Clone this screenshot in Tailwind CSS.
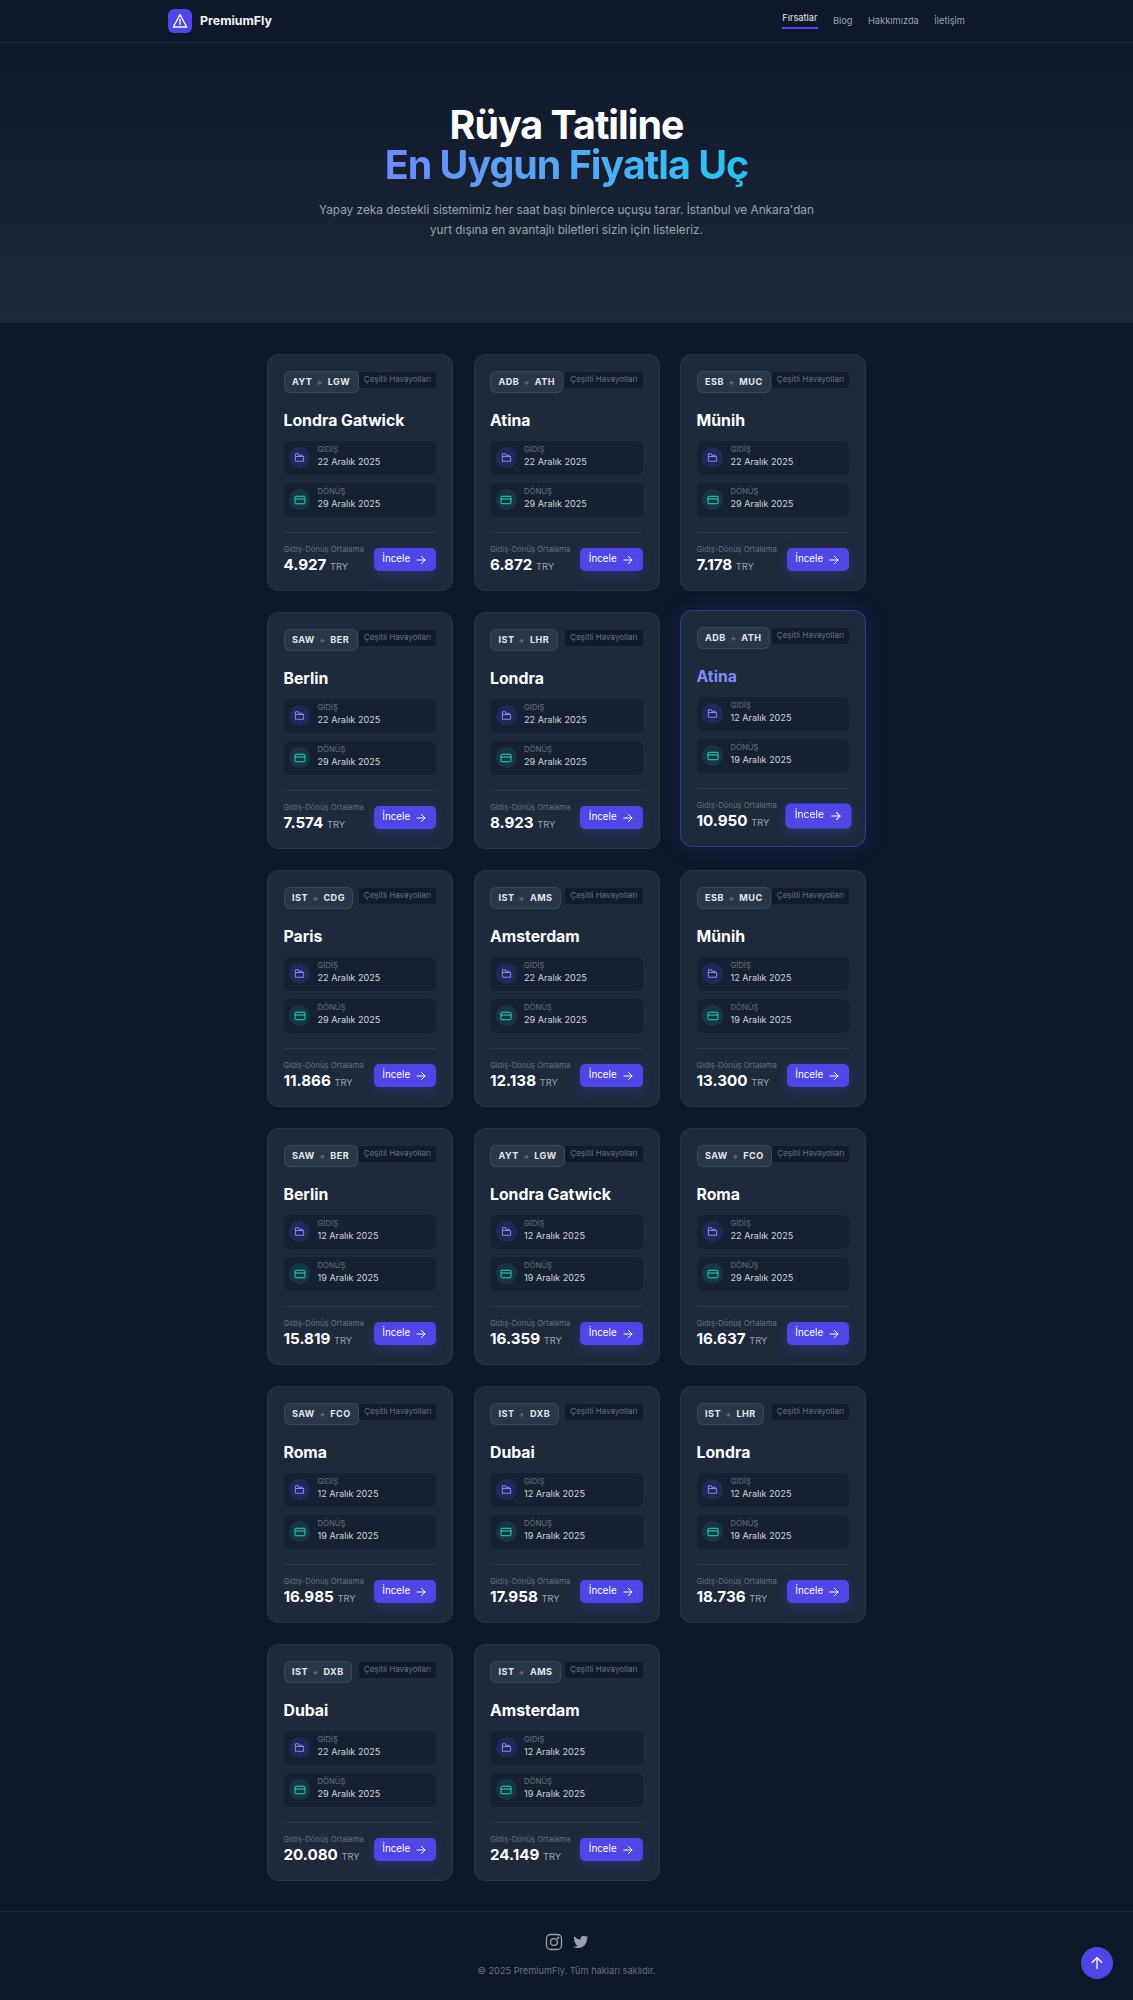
<!DOCTYPE html>
<html lang="tr">
<head>
  <meta charset="UTF-8" />
  <meta name="viewport" content="width=device-width, initial-scale=1.0"/>
  <title>PremiumFly</title>
  <script src="https://cdn.jsdelivr.net/npm/@tailwindcss/browser@4"></script>
</head>
<body class="bg-[#0f172a] text-white min-h-screen flex flex-col font-['Inter',sans-serif]">

  <!-- Navbar -->
  <nav class="h-[43px] bg-[#0f172a] border-b border-[#1e293b] flex justify-center">
    <div class="w-[797px] flex items-center justify-between">
      <div class="flex items-center gap-2">
        <div class="w-[24px] h-[24px] rounded-[6px] bg-[#4f46e5] flex items-center justify-center">
          <svg class="w-[16px] h-[16px]" viewBox="0 0 24 24" fill="none" stroke="white" stroke-width="2" stroke-linejoin="round" stroke-linecap="round"><path d="M12 2.500 22 21H2Z"/><path d="M12 9.500V17"/></svg>
        </div>
        <span class="text-[12.4px] font-bold text-[#f3f4f6]">PremiumFly</span>
      </div>
      <div class="flex items-center gap-[15.400px] text-[9.300px] text-[#9ca3af]">
        <a class="text-[#e5e7eb] border-b-2 border-[#4f46e5] pb-[2px] -mt-[2px]">Fırsatlar</a>
        <a>Blog</a>
        <a>Hakkımızda</a>
        <a>İletişim</a>
      </div>
    </div>
  </nav>

  <!-- Hero -->
  <header class="h-[280px] bg-gradient-to-b from-[#0f172a] to-[#1e293b] flex flex-col items-center pt-[62px]">
    <h1 class="text-[39.4px] leading-[40px] font-bold text-center tracking-tight">
      Rüya Tatiline<br>
      <span class="bg-gradient-to-r from-[#6b8cf8] to-[#22c4ee] bg-clip-text text-transparent">En Uygun Fiyatla Uç</span>
    </h1>
    <p class="mt-[16px] w-[520px] text-center text-[11.800px] leading-[19.500px] text-[#9ca3af]">Yapay zeka destekli sistemimiz her saat başı binlerce uçuşu tarar. İstanbul ve Ankara'dan<br>yurt dışına en avantajlı biletleri sizin için listeleriz.</p>
  </header>

  <!-- Cards -->
  <main class="flex justify-center pt-[31px] pb-[30px]">
    <div id="grid" class="w-[599px] grid grid-cols-3 gap-x-[20.500px] gap-y-[21px]"></div>
  </main>

  <!-- Footer -->
  <footer class="flex-1 bg-[#0f172a] border-t border-[#1e293b] flex flex-col items-center pt-[21px]">
    <div class="flex items-center gap-[10px] text-[#9ca3af]">
      <svg class="w-[18px] h-[18px]" viewBox="0 0 24 24" fill="none" stroke="currentColor" stroke-width="1.700"><rect x="2" y="2" width="20" height="20" rx="5.500"/><circle cx="12" cy="12" r="4.500"/><circle cx="17.500" cy="6.500" r="0.600" fill="currentColor"/></svg>
      <svg class="w-[16px] h-[16px]" viewBox="0 0 24 24" fill="currentColor"><path d="M23 4.900c-.8.400-1.700.600-2.600.700.900-.600 1.700-1.400 2-2.500-.900.500-1.900.900-2.900 1.100a4.600 4.600 0 0 0-7.900 4.200A13 13 0 0 1 2.100 3.600a4.600 4.600 0 0 0 1.400 6.100c-.700 0-1.400-.200-2.100-.600 0 2.300 1.600 4.200 3.700 4.700-.700.200-1.400.200-2.100.100.600 1.900 2.300 3.200 4.300 3.200A9.300 9.300 0 0 1 .5 19a13 13 0 0 0 7.100 2c8.500 0 13.200-7.100 13.200-13.200v-.600c.900-.600 1.700-1.400 2.200-2.300Z"/></svg>
    </div>
    <p class="mt-[13px] text-[9.200px] text-[#6b7280]">© 2025 PremiumFly. Tüm hakları saklıdır.</p>
  </footer>

  <button class="fixed right-[20px] bottom-[21px] w-[32px] h-[32px] rounded-full bg-[#4f46e5] flex items-center justify-center">
    <svg class="w-[16px] h-[16px]" viewBox="0 0 24 24" fill="none" stroke="white" stroke-width="2" stroke-linecap="round" stroke-linejoin="round"><path d="M12 20V4"/><path d="m5 11 7-7 7 7"/></svg>
  </button>

  <script>
    const d1 = ['22 Aralık 2025', '29 Aralık 2025'];
    const d2 = ['12 Aralık 2025', '19 Aralık 2025'];
    const deals = [
      ['AYT', 'LGW', 'Londra Gatwick', d1, '4.927'],
      ['ADB', 'ATH', 'Atina', d1, '6.872'],
      ['ESB', 'MUC', 'Münih', d1, '7.178'],
      ['SAW', 'BER', 'Berlin', d1, '7.574'],
      ['IST', 'LHR', 'Londra', d1, '8.923'],
      ['ADB', 'ATH', 'Atina', d2, '10.950', true],
      ['IST', 'CDG', 'Paris', d1, '11.866'],
      ['IST', 'AMS', 'Amsterdam', d1, '12.138'],
      ['ESB', 'MUC', 'Münih', d2, '13.300'],
      ['SAW', 'BER', 'Berlin', d2, '15.819'],
      ['AYT', 'LGW', 'Londra Gatwick', d2, '16.359'],
      ['SAW', 'FCO', 'Roma', d1, '16.637'],
      ['SAW', 'FCO', 'Roma', d2, '16.985'],
      ['IST', 'DXB', 'Dubai', d2, '17.958'],
      ['IST', 'LHR', 'Londra', d2, '18.736'],
      ['IST', 'DXB', 'Dubai', d1, '20.080'],
      ['IST', 'AMS', 'Amsterdam', d2, '24.149'],
    ];

    const folderIcon = `<svg class="w-[11px] h-[11px]" viewBox="0 0 24 24" fill="none" stroke="#818cf8" stroke-width="2.200" stroke-linejoin="round"><path d="M3 20V5a1 1 0 0 1 1-1h5l2 3h6a1 1 0 0 1 1 1v2"/><path d="M3 20h17a1 1 0 0 0 1-1v-8a1 1 0 0 0-1-1H4a1 1 0 0 0-1 1"/></svg>`;
    const cardIcon = `<svg class="w-[12px] h-[12px]" viewBox="0 0 24 24" fill="none" stroke="#2dd4bf" stroke-width="2" stroke-linejoin="round"><rect x="2" y="4.500" width="20" height="15" rx="2"/><path d="M2 10h20"/></svg>`;

    function dateRow(icon, circle, label, date) {
      return `<div class="h-[34px] rounded-[6px] bg-[#172033] flex items-center gap-[7.500px] px-[5.500px]">
        <div class="w-[21px] h-[21px] rounded-full ${circle} flex items-center justify-center">${icon}</div>
        <div class="flex flex-col -mt-[2px]">
          <span class="text-[7.700px] leading-[12px] text-[#6b7280]">${label}</span>
          <span class="text-[9.100px] leading-[12.500px] text-[#d1d5db]">${date}</span>
        </div>
      </div>`;
    }

    document.getElementById('grid').innerHTML = deals.map(([from, to, city, dates, price, active]) => `
      <div class="h-[237px] rounded-[12px] bg-[#1e293b] border pl-[15.500px] pr-[16px] py-[16px] flex flex-col ${active ? 'border-[#4f46e5]/50 -translate-y-[2px] shadow-[0_0_24px_rgba(79,70,229,0.15)]' : 'border-[#334155]/50'}">
        <div class="flex items-start justify-between">
          <div class="h-[22px] rounded-[6px] bg-[#334155]/50 border border-[#475569]/60 flex items-center gap-[5px] px-[7.500px] text-[9.100px] font-bold tracking-[0.05em] text-[#e5e7eb]">
            <span>${from}</span><span class="text-[6px] text-[#6b7280]">✈</span><span>${to}</span>
          </div>
          <span class="mt-px h-[15.500px] rounded-[3px] bg-[#0f172a]/80 px-[5px] text-[8px] leading-[15.500px] text-[#6b7280] whitespace-nowrap">Çeşitli Havayolları</span>
        </div>
        <h3 class="mt-[17.500px] text-[15.800px] leading-[20px] font-bold ${active ? 'text-[#818cf8]' : 'text-white'}">${city}</h3>
        <div class="mt-[10px] flex flex-col gap-[8px]">
          ${dateRow(folderIcon, 'bg-[#4f46e5]/20', 'GİDİŞ', dates[0])}
          ${dateRow(cardIcon, 'bg-[#14b8a6]/15', 'DÖNÜŞ', dates[1])}
        </div>
        <div class="mt-[15px] pt-[11px] border-t border-[#334155]/70 flex items-center justify-between">
          <div class="flex flex-col">
            <span class="text-[7.700px] leading-[12px] text-[#6b7280]">Gidiş-Dönüş Ortalama</span>
            <span class="text-[15.200px] leading-[18px] font-bold text-white">${price} <span class="text-[9.300px] font-normal text-[#9ca3af]">TRY</span></span>
          </div>
          <button class="h-[23.500px] w-[62.500px] rounded-[5px] bg-[#4f46e5] flex items-center justify-center gap-[5px] text-[9.800px] font-normal text-white shadow-[0_4px_12px_rgba(79,70,229,0.3)] ${active ? 'scale-105' : ''}">
            İncele
            <svg class="w-[12px] h-[12px]" viewBox="0 0 24 24" fill="none" stroke="white" stroke-width="2" stroke-linecap="round" stroke-linejoin="round"><path d="M4 12h16"/><path d="m13 5 7 7-7 7"/></svg>
          </button>
        </div>
      </div>`).join('');
  </script>
</body>
</html>
